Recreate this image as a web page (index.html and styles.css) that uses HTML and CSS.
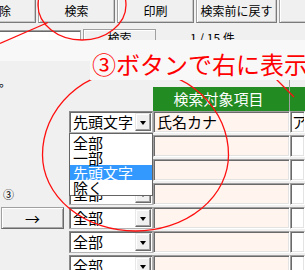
FILE: index.html
```html
<!DOCTYPE html>
<html lang="ja">
<head>
<meta charset="utf-8">
<link rel="stylesheet" href="styles.css">
</head>
<body>
<div class="page">
  <div class="toolbar">
    <div class="tb-btn b1">削除</div>
    <div class="tb-btn b2">検索</div>
    <div class="tb-btn b3">印刷</div>
    <div class="tb-btn b4">検索前に戻す</div>
    <div class="tb-btn b5"></div>
  </div>
  <div class="search-row">
    <div class="textbox"></div>
    <div class="sbtn">検索</div>
    <div class="count">1 / 15 件</div>
  </div>
  <div class="band"></div>

  <div class="table">
    <div class="row top-row">
      <div class="lc"><span class="dot">。</span></div>
    </div>
    <div class="row hdr-row">
      <div class="lc"></div>
      <div class="sc"></div>
      <div class="tc"><div class="hdr-main">検索対象項目</div></div>
      <div class="wc"><div class="hdr-side"></div></div>
    </div>

    <div class="row">
      <div class="lc"></div>
      <div class="sc">
        <div class="select"><span class="sel-text">先頭文字</span><span class="arrow"><i class="tri"></i></span></div>
        <ul class="droplist">
          <li>全部</li>
          <li>一部</li>
          <li class="on">先頭文字</li>
          <li>除く</li>
        </ul>
      </div>
      <div class="tc"><div class="cell pink">氏名カナ</div></div>
      <div class="wc"><div class="cell white">ア</div></div>
    </div>

    <div class="row">
      <div class="lc"></div>
      <div class="sc"><div class="select"><span class="sel-text">全部</span><span class="arrow"><i class="tri"></i></span></div></div>
      <div class="tc"><div class="cell pink"></div></div>
      <div class="wc"><div class="cell white"></div></div>
    </div>

    <div class="row">
      <div class="lc"></div>
      <div class="sc"><div class="select"><span class="sel-text">全部</span><span class="arrow"><i class="tri"></i></span></div></div>
      <div class="tc"><div class="cell pink"></div></div>
      <div class="wc"><div class="cell white"></div></div>
    </div>

    <div class="row">
      <div class="lc"><span class="num">③</span></div>
      <div class="sc"><div class="select"><span class="sel-text">全部</span><span class="arrow"><i class="tri"></i></span></div></div>
      <div class="tc"><div class="cell pink"></div></div>
      <div class="wc"><div class="cell white"></div></div>
    </div>

    <div class="row">
      <div class="lc"><div class="go-btn">→</div></div>
      <div class="sc"><div class="select"><span class="sel-text">全部</span><span class="arrow"><i class="tri"></i></span></div></div>
      <div class="tc"><div class="cell pink"></div></div>
      <div class="wc"><div class="cell white"></div></div>
    </div>

    <div class="row">
      <div class="lc"></div>
      <div class="sc"><div class="select"><span class="sel-text">全部</span><span class="arrow"><i class="tri"></i></span></div></div>
      <div class="tc"><div class="cell pink"></div></div>
      <div class="wc"><div class="cell white"></div></div>
    </div>

    <div class="row">
      <div class="lc"></div>
      <div class="sc"><div class="select"><span class="sel-text">全部</span><span class="arrow"><i class="tri"></i></span></div></div>
      <div class="tc"><div class="cell pink"></div></div>
      <div class="wc"><div class="cell white"></div></div>
    </div>
  </div>

  <svg class="marks" width="305" height="270" viewBox="0 0 305 270">
    <ellipse cx="82" cy="5" rx="44" ry="35"/>
    <line x1="0" y1="43.5" x2="48" y2="22.5"/>
    <path d="M42.5 155 A93 86 0 0 1 228.5 155 A93 76 0 0 1 42.5 155 Z"/>
    <line x1="272" y1="75" x2="294" y2="97"/>
  </svg>

  <div class="note">③ボタンで右に表示</div>
</div>
</body>
</html>
```
FILE: styles.css
```css
html, body {
  margin: 0;
  padding: 0;
  width: 305px;
  height: 270px;
  overflow: hidden;
  background: #f0f0f0;
}
.page {
  position: relative;
  width: 305px;
  height: 270px;
  overflow: hidden;
  font-family: "Noto Sans CJK JP", "Noto Sans", sans-serif;
  color: #000;
}

/* toolbar */
.toolbar {
  display: flex;
  gap: 2px;
  margin-top: -2px;
  margin-left: -38px;
  height: 25px;
}
.tb-btn {
  box-sizing: border-box;
  flex: none;
  height: 25px;
  background: #f0f0f0;
  border: 1px solid #a0a0a0;
  border-right-color: #7a7a7a;
  border-bottom-color: #7a7a7a;
  box-shadow: inset 1px 1px 0 #fff, inset -1px -1px 0 #c8c8c8;
  display: flex;
  align-items: center;
  justify-content: center;
  font-size: 12px;
  line-height: 12px;
  white-space: nowrap;
}
.b1 { width: 74px; }
.b2 { width: 77px; }
.b3 { width: 77px; }
.b4 { width: 81px; }
.b5 { width: 80px; }

/* search row (clipped by the band below) */
.search-row {
  display: flex;
  align-items: flex-start;
  height: 11px;
  margin-top: 6px;
  overflow: hidden;
}
.textbox {
  box-sizing: border-box;
  width: 83px;
  height: 22px;
  margin-left: -2px;
  margin-top: 1px;
  background: #fff;
  border: 1px solid #a0a0a0;
  box-shadow: inset 1px 1px 0 #6a6a6a;
}
.sbtn {
  box-sizing: border-box;
  width: 73px;
  height: 24px;
  margin-left: 2px;
  padding-top: 2px;
  background: #f0f0f0;
  border: 1px solid #a0a0a0;
  box-shadow: inset 1px 1px 0 #fff;
  text-align: center;
  font-size: 12px;
  line-height: 12px;
}
.count {
  margin-left: 34px;
  padding-top: 3px;
  font-size: 12px;
  line-height: 12px;
  white-space: nowrap;
}

.band {
  height: 21px;
  background: #f8f8f8;
}

/* table */
.table {
  display: flex;
  flex-direction: column;
}
.row {
  display: flex;
  height: 24px;
  flex: none;
}
.top-row { height: 26px; }
.lc { width: 69px; flex: none; }
.sc { width: 84px; flex: none; position: relative; }
.tc { width: 137px; flex: none; }
.wc { flex: 1; min-width: 0; }

.dot {
  display: block;
  margin-left: -1px;
  padding-top: 15px;
  font-size: 12px;
  line-height: 12px;
}
.num {
  display: block;
  padding-top: 6px;
  padding-left: 3px;
  font-size: 11px;
  line-height: 11px;
}
.go-btn {
  box-sizing: border-box;
  width: 63px;
  height: 22px;
  margin-left: 1px;
  background: #f0f0f0;
  border: 1px solid #a0a0a0;
  border-right-color: #6a6a6a;
  border-bottom-color: #6a6a6a;
  box-shadow: inset 1px 1px 0 #fff, inset -1px -1px 0 #a8a8a8;
  display: flex;
  align-items: center;
  justify-content: center;
  font-size: 15px;
  line-height: 15px;
}

.hdr-main {
  box-sizing: border-box;
  height: 24px;
  background: #228b22;
  border-right: 1px solid #a0a0a0;
  color: #fff;
  font-size: 15px;
  line-height: 24px;
  text-align: center;
  padding-right: 5px;
  position: relative;
}
.hdr-main::after {
  content: "";
  position: absolute;
  right: -1px;
  top: -7px;
  width: 1px;
  height: 7px;
  background: #a0a0a0;
}
.hdr-side {
  height: 24px;
  background: #228b22;
}

.select {
  box-sizing: border-box;
  width: 84px;
  height: 22px;
  padding: 1px;
  background: #fff;
  border: 1px solid #8a8a8a;
  border-right-color: #b4b4b4;
  border-bottom-color: #b4b4b4;
  box-shadow: inset 1px 1px 0 #6a6a6a;
  display: flex;
  align-items: stretch;
}
.sel-text {
  flex: 1;
  padding-left: 2px;
  font-size: 15px;
  line-height: 18px;
  white-space: nowrap;
  overflow: hidden;
}
.arrow {
  box-sizing: border-box;
  width: 16px;
  flex: none;
  background: #f0f0f0;
  border: 1px solid #e8e8e8;
  border-right-color: #6a6a6a;
  border-bottom-color: #6a6a6a;
  box-shadow: inset -1px -1px 0 #a0a0a0, inset 1px 1px 0 #fff;
  display: flex;
  align-items: center;
  justify-content: center;
}
.tri {
  display: block;
  width: 0;
  height: 0;
  border-left: 3.5px solid transparent;
  border-right: 3.5px solid transparent;
  border-top: 4px solid #000;
  margin-top: 1px;
}

.droplist {
  position: absolute;
  left: 0;
  top: 22px;
  z-index: 2;
  box-sizing: border-box;
  width: 84px;
  margin: 0;
  padding: 1px 0 0 0;
  list-style: none;
  background: #fff;
  border: 1px solid #646464;
}
.droplist li {
  height: 15px;
  padding-left: 3px;
  font-size: 15px;
  line-height: 15px;
  white-space: nowrap;
}
.droplist li.on {
  background: #3399ff;
  color: #fff;
}

.cell {
  box-sizing: border-box;
  height: 22px;
  border: 1px solid #a0a0a0;
  border-right-color: #fff;
  border-bottom-color: #fff;
  box-shadow: inset 1px 1px 0 #6a6a6a, inset -1px -1px 0 #e3e3e3;
  padding-left: 3px;
  font-size: 15px;
  line-height: 20px;
  white-space: nowrap;
  overflow: hidden;
}
.pink { background: #fff5ee; }
.white { background: #fff; padding-left: 1px; }

/* annotation overlay (sits above the drawn marks) */
.marks {
  position: absolute;
  left: 0;
  top: 0;
  z-index: 5;
  pointer-events: none;
}
.marks ellipse,
.marks path,
.marks line {
  fill: none;
  stroke: #ff1010;
  stroke-width: 1.3;
}
.note {
  position: absolute;
  left: 90px;
  top: 40px;
  right: 0;
  height: 40px;
  z-index: 6;
  box-sizing: border-box;
  padding-top: 12px;
  padding-left: 2px;
  background: #f8f8f8;
  color: #ff0000;
  font-size: 24px;
  line-height: 24px;
  white-space: nowrap;
  overflow: hidden;
}
```
